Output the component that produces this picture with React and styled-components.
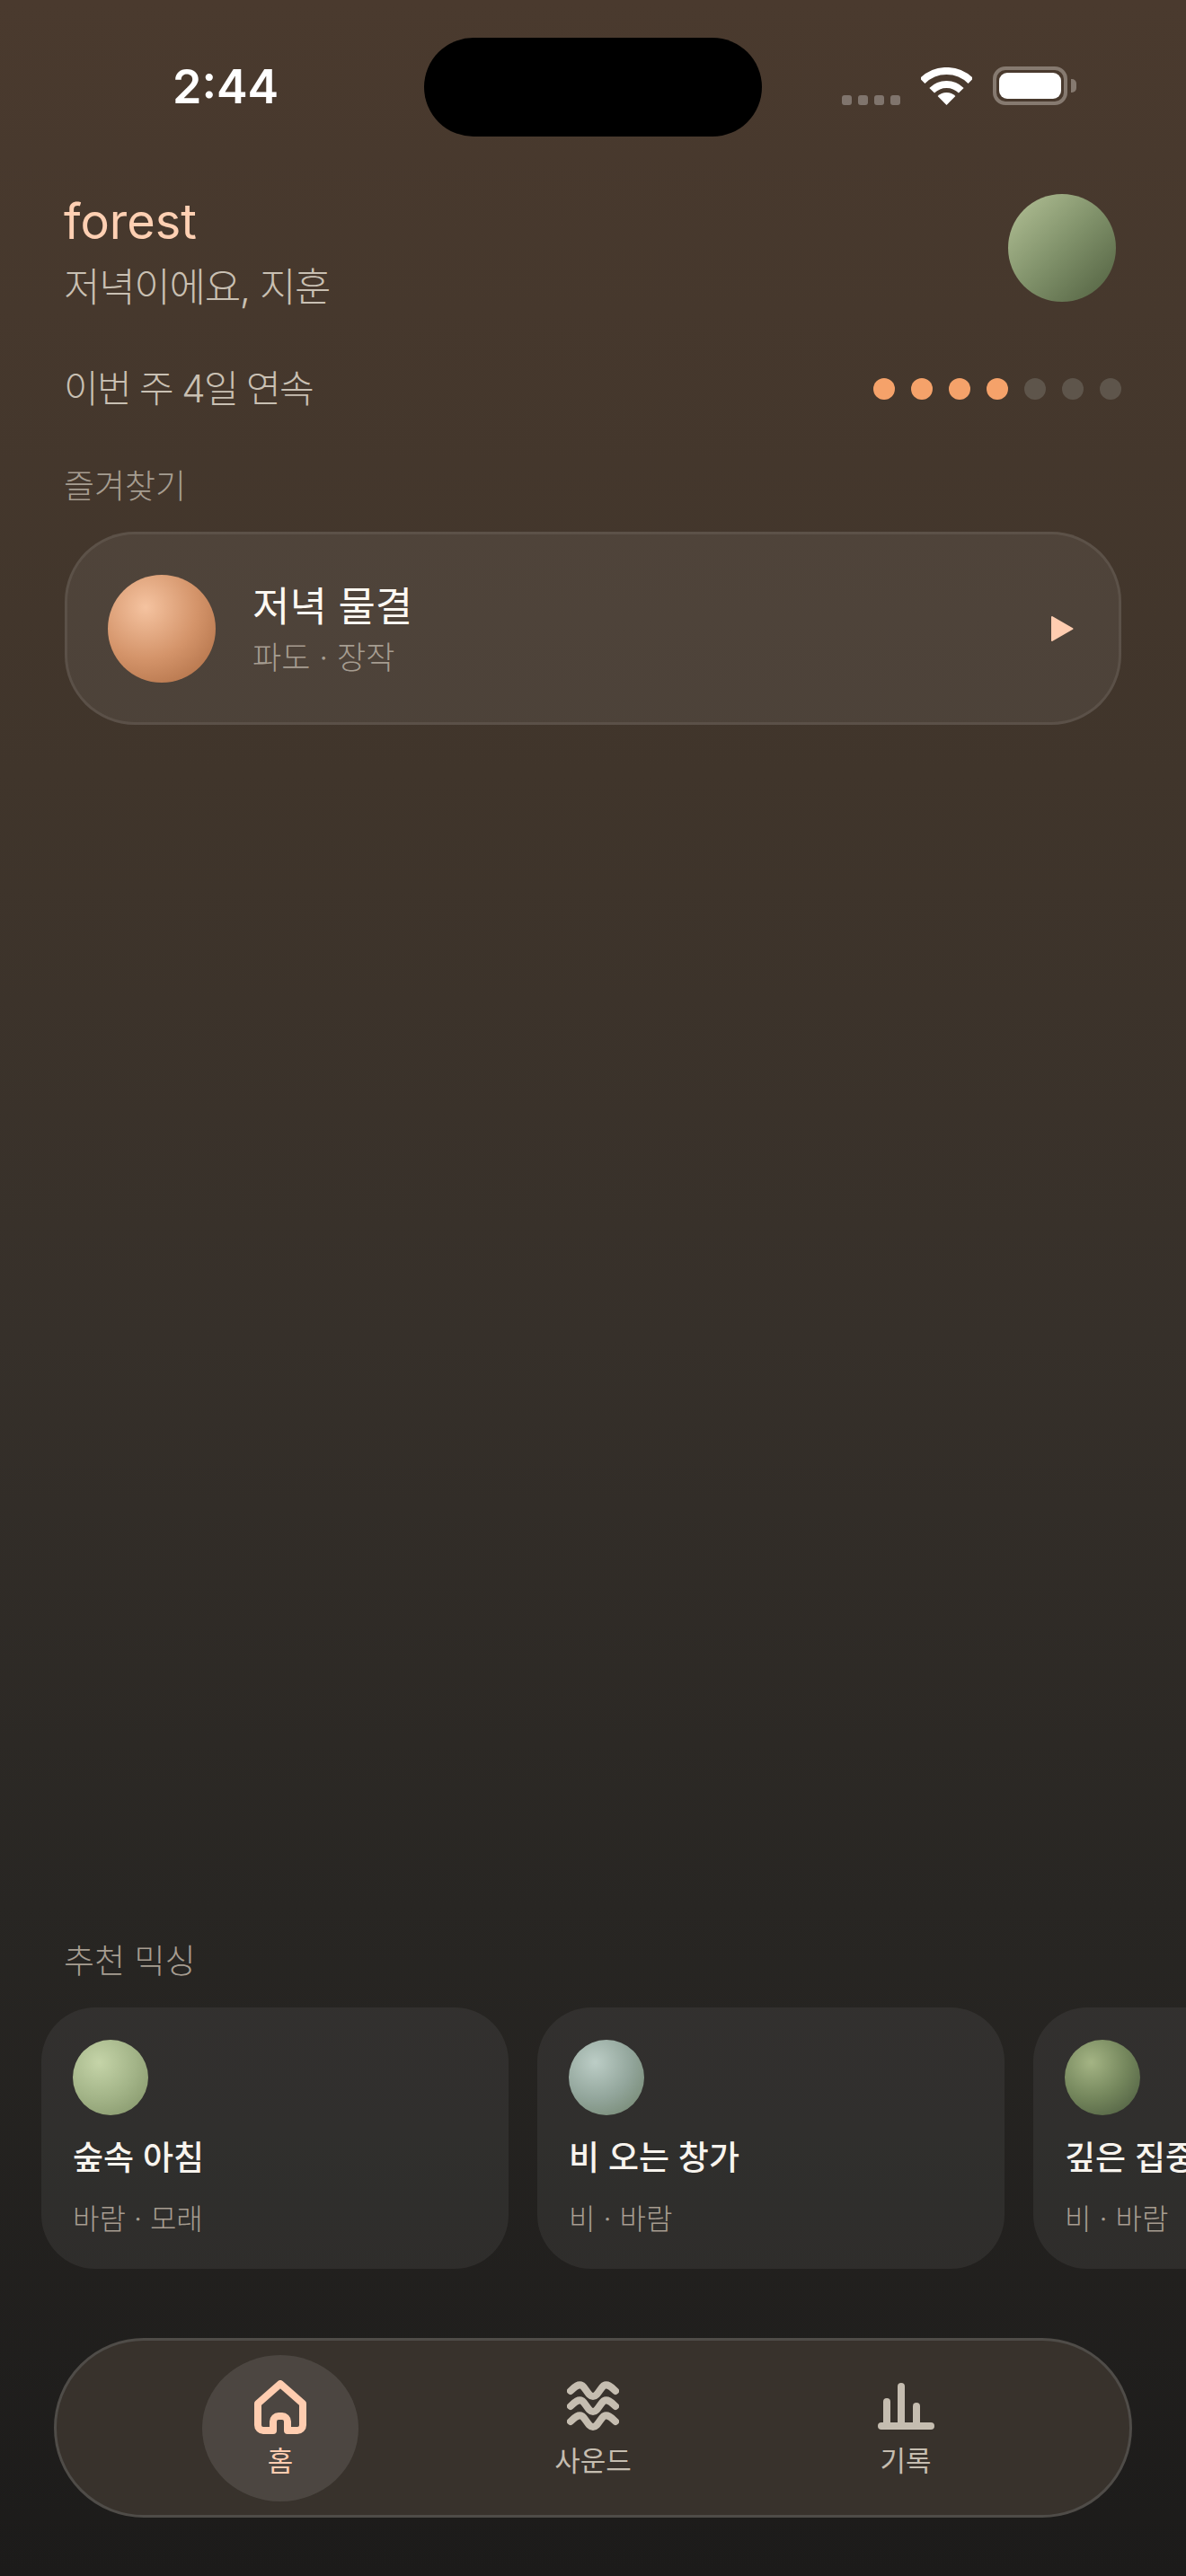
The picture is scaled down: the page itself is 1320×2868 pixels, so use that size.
import React from "react";
import styled, { createGlobalStyle } from "styled-components";

const Global = createGlobalStyle`
  html, body { margin: 0; padding: 0; background: #1c1b1a; }
  * { box-sizing: border-box; }
  body { font-family: "Inter", "Noto Sans CJK KR", sans-serif; }
`;

const Page = styled.div`
  width: 1320px;
  height: 2868px;
  overflow: hidden;
  display: flex;
  flex-direction: column;
  background: linear-gradient(180deg, #4a3a2e 0%, #40352b 30%, #36302a 52%, #282623 74%, #1c1b1a 100%);
`;

const StatusBar = styled.div`
  height: 152px;
  padding-top: 42px;
  display: flex;
  align-items: flex-start;
`;
const Time = styled.div`
  width: 472px;
  height: 110px;
  padding-left: 192px;
  font-size: 52px;
  font-weight: 600;
  line-height: 110px;
  color: #fff;
`;
const Island = styled.div`
  width: 376px;
  height: 110px;
  border-radius: 55px;
  background: #000;
`;
const StatusIcons = styled.div`
  display: flex;
  align-items: flex-end;
  margin-left: 89px;
  height: 75px;
`;
const Signal = styled.div`
  display: flex;
  gap: 7px;
  margin-right: 23px;
`;
const SignalDot = styled.span`
  width: 11px;
  height: 11px;
  border-radius: 3px;
  background: rgba(255, 255, 255, 0.3);
`;
const Battery = styled.div`
  margin-left: 23px;
  width: 83px;
  height: 43px;
  border: 4px solid #867a70;
  border-radius: 14px;
  padding: 3px;
  position: relative;
  &::after {
    content: "";
    position: absolute;
    right: -14px;
    top: 10px;
    width: 6px;
    height: 15px;
    border-radius: 0 5px 5px 0;
    background: #867a70;
  }
`;
const BatteryFill = styled.div`
  width: 100%;
  height: 100%;
  border-radius: 9px;
  background: #fff;
`;

const Header = styled.div`
  margin-top: 64px;
  padding: 0 78px 0 71px;
  display: flex;
  justify-content: space-between;
`;
const Brand = styled.div`
  font-size: 54px;
  line-height: 62px;
  color: #ffd0b3;
  font-weight: 400;
`;
const Greeting = styled.div`
  margin-top: 9px;
  font-size: 44px;
  line-height: 66px;
  font-weight: 300;
  letter-spacing: -0.03em;
  color: #c9c0b3;
`;
const Avatar = styled.div`
  width: 120px;
  height: 120px;
  border-radius: 50%;
  background: linear-gradient(135deg, #b4c297 0%, #80916a 50%, #505f3f 100%);
`;

const StreakRow = styled.div`
  margin-top: 50px;
  padding: 0 72px 0 71px;
  display: flex;
  justify-content: space-between;
  align-items: center;
`;
const StreakText = styled.div`
  font-size: 42px;
  line-height: 60px;
  font-weight: 300;
  letter-spacing: -0.04em;
  color: #c9c0b3;
`;
const Dots = styled.div`
  display: flex;
  gap: 18px;
`;
const Dot = styled.span`
  width: 24px;
  height: 24px;
  border-radius: 50%;
  background: ${(p) => (p.$on ? "#f5a26a" : "#5e554b")};
`;

const SectionLabel = styled.div`
  padding-left: 71px;
  font-size: 37px;
  line-height: 50px;
  font-weight: 300;
  color: #a69d91;
  margin-top: ${(p) => p.$top || 0}px;
`;

const FavCard = styled.div`
  margin: 25px 72px 0;
  height: 215px;
  border-radius: 78px;
  border: 3px solid rgba(255, 255, 255, 0.08);
  background: rgba(255, 255, 255, 0.065);
  padding: 0 50px 0 45px;
  display: flex;
  align-items: center;
`;
const FavOrb = styled.div`
  width: 120px;
  height: 120px;
  flex: none;
  border-radius: 50%;
  background: radial-gradient(circle at 35% 30%, #f5c3a0 0%, #d4946a 50%, #a8683f 100%);
`;
const FavText = styled.div`
  margin-left: 41px;
  flex: 1;
`;
const FavTitle = styled.div`
  font-size: 45px;
  line-height: 62px;
  font-weight: 400;
  color: #fdf8f2;
  padding-top: 2px;
`;
const FavSub = styled.div`
  font-size: 35px;
  line-height: 50px;
  font-weight: 300;
  color: #a69d91;
`;

const Recommend = styled.div`
  margin-top: auto;
`;
const Rail = styled.div`
  margin-top: 26px;
  padding-left: 46px;
  display: flex;
  gap: 32px;
`;
const MixCard = styled.div`
  width: 520px;
  height: 291px;
  flex: none;
  border-radius: 60px;
  background: rgba(255, 255, 255, 0.058);
  padding: 36px 35px;
`;
const MixOrb = styled.div`
  width: 84px;
  height: 84px;
  border-radius: 50%;
  background: radial-gradient(circle at 35% 30%, ${(p) => p.$from} 0%, ${(p) => p.$mid} 50%, ${(p) => p.$to} 100%);
`;
const MixTitle = styled.div`
  margin-top: 18px;
  font-size: 37px;
  line-height: 60px;
  font-weight: 500;
  color: #f8f4ee;
  white-space: nowrap;
`;
const MixSub = styled.div`
  margin-top: 14px;
  font-size: 32px;
  line-height: 48px;
  font-weight: 300;
  color: #a69d91;
  white-space: nowrap;
`;

const Nav = styled.div`
  margin: 77px 60px 65px;
  height: 200px;
  border-radius: 100px;
  border: 3px solid #4f4c48;
  background: #38322c;
  display: flex;
  justify-content: center;
  align-items: center;
`;
const NavSlot = styled.div`
  width: 348px;
  display: flex;
  justify-content: center;
`;
const NavItem = styled.div`
  width: 174px;
  height: 163px;
  padding-top: 4px;
  border-radius: 50%;
  background: ${(p) => (p.$active ? "rgba(255,255,255,0.1)" : "transparent")};
  color: ${(p) => (p.$active ? "#ffcdb0" : "#c5bdb0")};
  display: flex;
  flex-direction: column;
  align-items: center;
  justify-content: center;
`;
const NavIcon = styled.svg`
  display: block;
  height: 60px;
  fill: none;
  stroke: currentColor;
  stroke-linecap: round;
  stroke-linejoin: round;
`;
const NavLabel = styled.div`
  margin-top: 10px;
  font-size: 31px;
  line-height: 40px;
  font-weight: 400;
`;

const wave = (y) =>
  `M4 ${y + 6}C9 ${y + 1} 13 ${y - 2} 17 ${y}C21 ${y + 3} 24 ${y + 12} 29 ${y + 12}C34 ${y + 12} 37 ${y + 3} 41 ${y}C45 ${y - 2} 49 ${y + 1} 54 ${y + 6}`;

const mixes = [
  { t: "숲속 아침", s: "바람 · 모래", c: ["#c5d4a8", "#a3b488", "#7f9065"] },
  { t: "비 오는 창가", s: "비 · 바람", c: ["#bccdc6", "#93a69c", "#6d8068"] },
  { t: "깊은 집중", s: "비 · 바람", c: ["#a4b484", "#74865c", "#47563c"] },
];

export default function App() {
  return (
    <Page>
      <Global />
      <StatusBar>
        <Time>2:44</Time>
        <Island />
        <StatusIcons>
          <Signal>
            {[0, 1, 2, 3].map((i) => (
              <SignalDot key={i} />
            ))}
          </Signal>
          <svg width="57" height="42" viewBox="0 0 57 42" fill="none" style={{ display: "block" }}>
            <path d="M1.6 15.1A38 38 0 0 1 55.4 15.1" stroke="#fff" strokeWidth="8" />
            <path d="M12.2 25.7A23 23 0 0 1 44.8 25.7" stroke="#fff" strokeWidth="8" />
            <path d="M28.5 42L18.6 32.1A14 14 0 0 1 38.4 32.1Z" fill="#fff" />
          </svg>
          <Battery>
            <BatteryFill />
          </Battery>
        </StatusIcons>
      </StatusBar>

      <Header>
        <div>
          <Brand>forest</Brand>
          <Greeting>저녁이에요, 지훈</Greeting>
        </div>
        <Avatar />
      </Header>

      <StreakRow>
        <StreakText>이번 주 4일 연속</StreakText>
        <Dots>
          {[1, 1, 1, 1, 0, 0, 0].map((v, i) => (
            <Dot key={i} $on={!!v} />
          ))}
        </Dots>
      </StreakRow>

      <SectionLabel $top={54}>즐겨찾기</SectionLabel>
      <FavCard>
        <FavOrb />
        <FavText>
          <FavTitle>저녁 물결</FavTitle>
          <FavSub>파도 · 장작</FavSub>
        </FavText>
        <svg width="25" height="30" viewBox="0 0 25 30" style={{ display: "block" }}>
          <path d="M1 2L23.5 15L1 28Z" fill="#ffcdb0" stroke="#ffcdb0" strokeWidth="2" strokeLinejoin="round" />
        </svg>
      </FavCard>

      <Recommend>
        <SectionLabel>추천 믹싱</SectionLabel>
        <Rail>
          {mixes.map((m) => (
            <MixCard key={m.t}>
              <MixOrb $from={m.c[0]} $mid={m.c[1]} $to={m.c[2]} />
              <MixTitle>{m.t}</MixTitle>
              <MixSub>{m.s}</MixSub>
            </MixCard>
          ))}
        </Rail>
      </Recommend>

      <Nav>
        <NavSlot>
          <NavItem $active>
            <NavIcon width="58" viewBox="0 0 58 60" strokeWidth="8">
              <path d="M4 26L29 4L54 26V50A6 6 0 0 1 48 56H37V46A6 6 0 0 0 31 40H27A6 6 0 0 0 21 46V56H10A6 6 0 0 1 4 50Z" />
            </NavIcon>
            <NavLabel>홈</NavLabel>
          </NavItem>
        </NavSlot>
        <NavSlot>
          <NavItem>
            <NavIcon width="58" viewBox="0 0 58 60" strokeWidth="8">
              <path d={wave(6)} />
              <path d={wave(23)} />
              <path d={wave(40)} />
            </NavIcon>
            <NavLabel>사운드</NavLabel>
          </NavItem>
        </NavSlot>
        <NavSlot>
          <NavItem>
            <NavIcon width="63" viewBox="0 0 63 60" strokeWidth="8">
              <path d="M4 51H59" />
              <path d="M10 24V49" />
              <path d="M26 7V49" />
              <path d="M43 29V49" />
            </NavIcon>
            <NavLabel>기록</NavLabel>
          </NavItem>
        </NavSlot>
      </Nav>
    </Page>
  );
}
